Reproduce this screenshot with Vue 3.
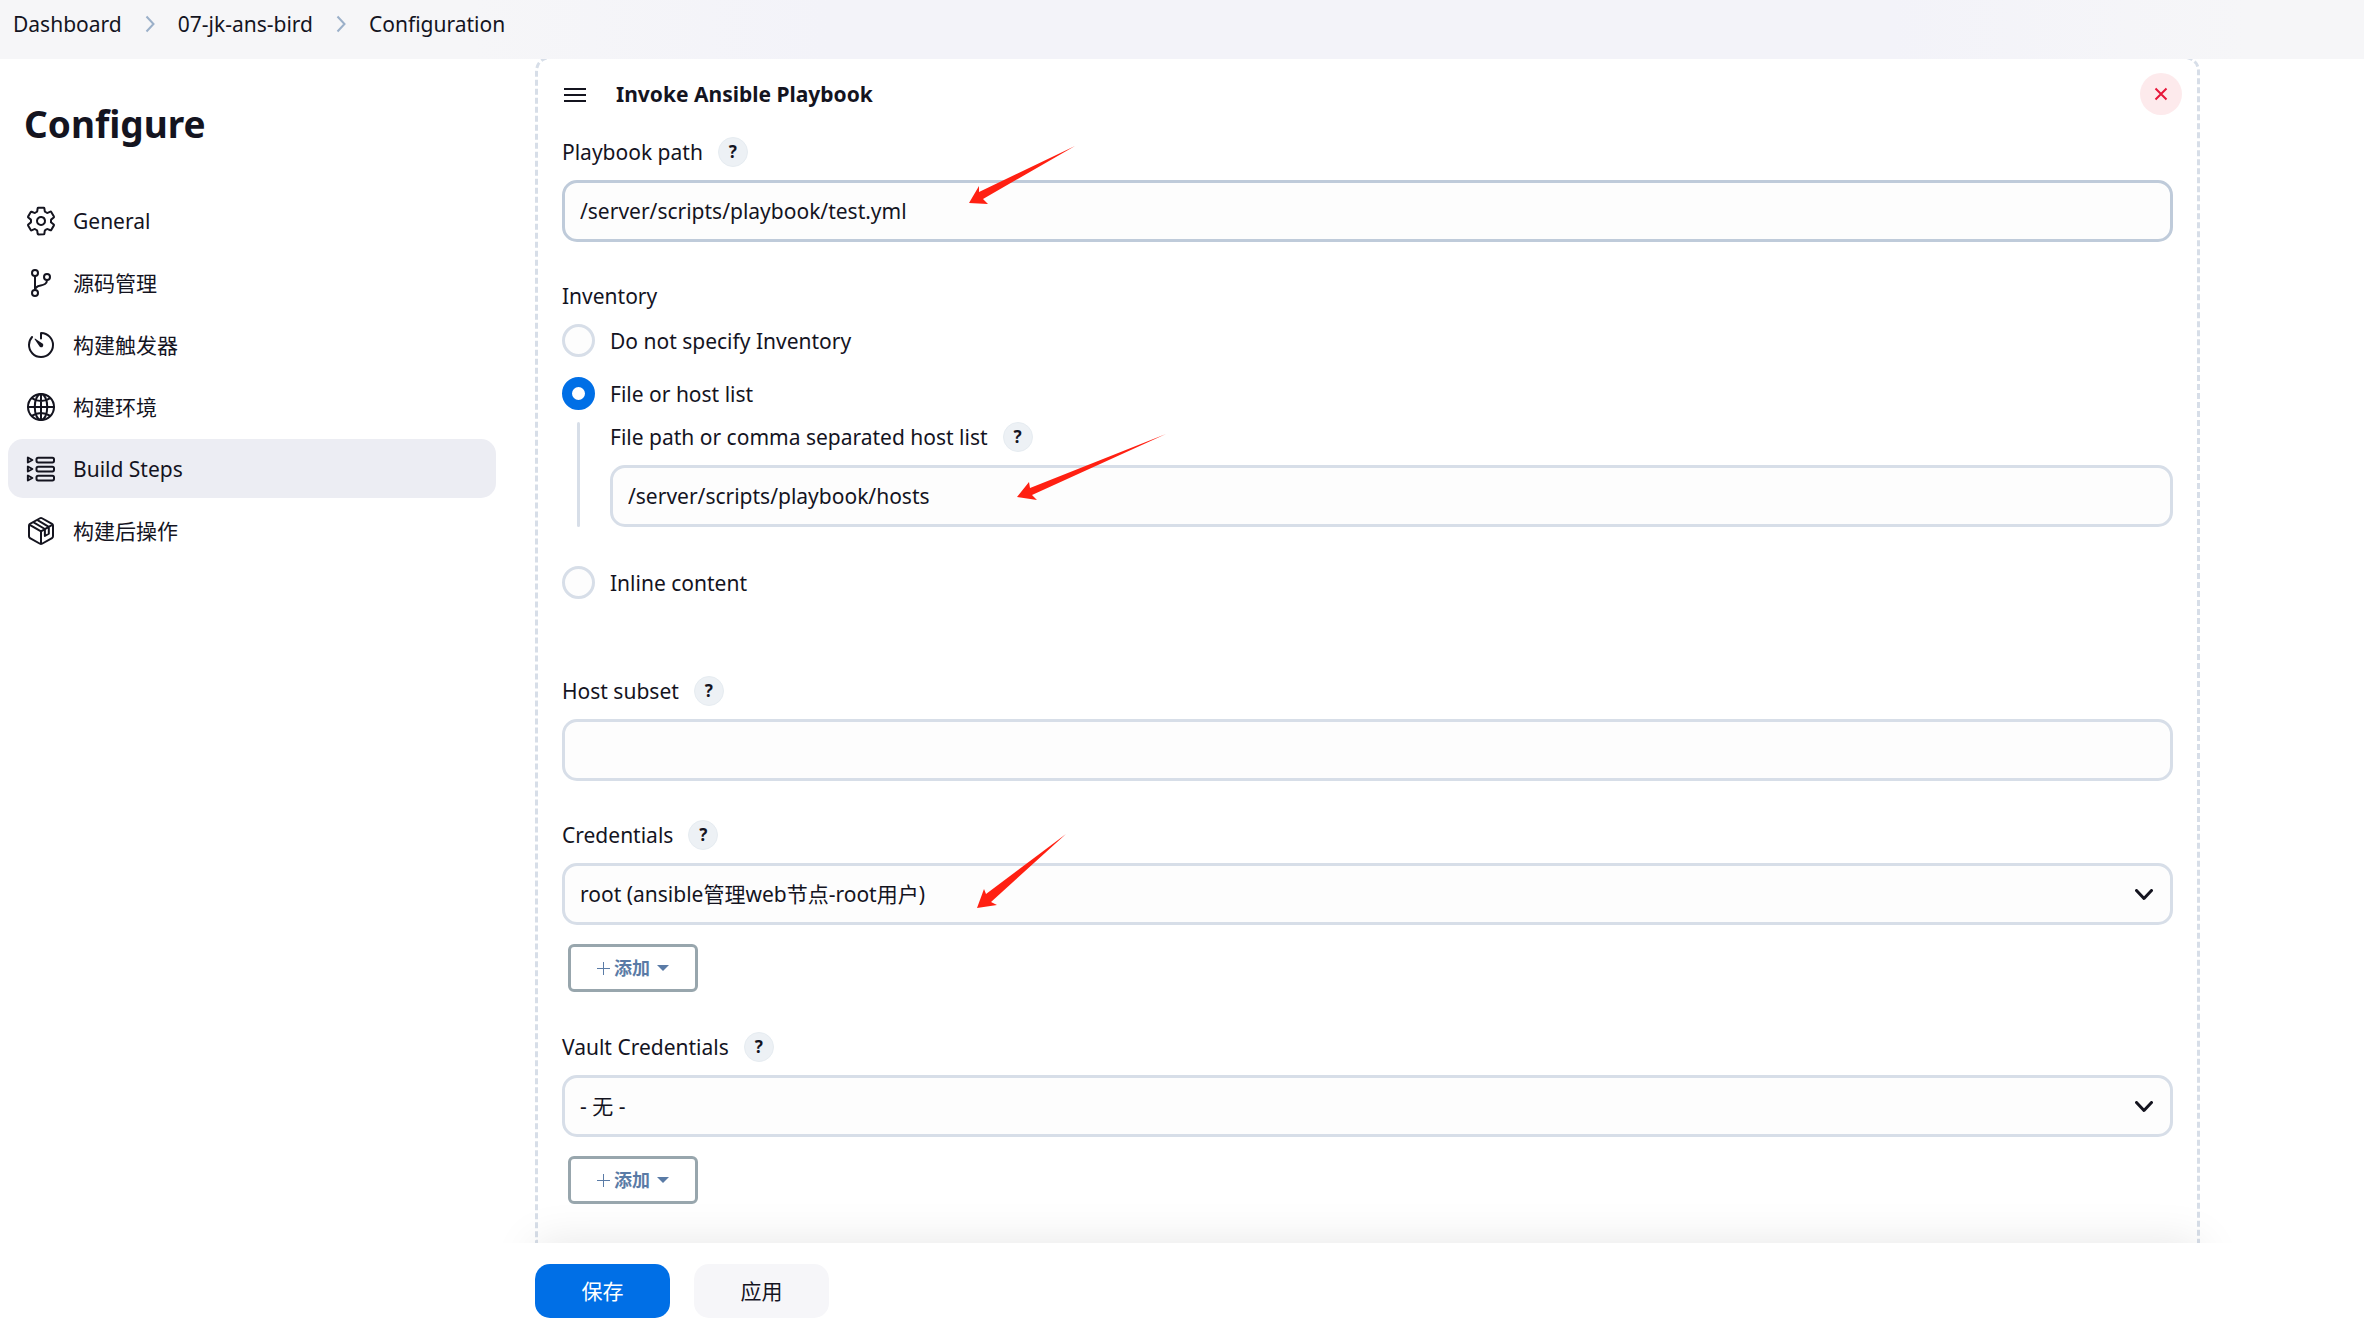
<script setup>
import { ref } from 'vue'

const crumbs = ['Dashboard', '07-jk-ans-bird', 'Configuration']
const sections = [
  { name: 'General', icon: 'gear' },
  { name: '源码管理', icon: 'branch' },
  { name: '构建触发器', icon: 'timer' },
  { name: '构建环境', icon: 'globe' },
  { name: 'Build Steps', icon: 'steps' },
  { name: '构建后操作', icon: 'package' },
]
const active = ref('Build Steps')
const playbook = ref('/server/scripts/playbook/test.yml')
const inventory = ref('file')
const hosts = ref('/server/scripts/playbook/hosts')
const subset = ref('')
const credential = ref('root')
const vault = ref('none')
</script>

<template>
  <div class="page">
    <header class="topbar">
      <nav class="crumbs" aria-label="Breadcrumb">
        <template v-for="(c, i) in crumbs" :key="c">
          <svg v-if="i" class="sep" viewBox="0 0 10 18" aria-hidden="true"><path d="M1.5 1.5 8.5 9l-7 7.500" /></svg>
          <a href="#">{{ c }}</a>
        </template>
      </nav>
    </header>

    <div class="body">
      <aside class="side">
        <h1>Configure</h1>
        <nav class="menu" aria-label="Sections">
          <a v-for="s in sections" :key="s.name" href="#" class="item" :class="{ active: s.name === active }" @click.prevent="active = s.name">
            <svg class="icon" viewBox="0 0 512 512" aria-hidden="true">
              <path v-if="s.icon === 'gear'" d="M262.290 192.310a64 64 0 1 0 57.400 57.400 64.130 64.130 0 0 0-57.400-57.400zM416.390 256a154.340 154.340 0 0 1-1.530 20.790l45.210 35.460a10.810 10.810 0 0 1 2.450 13.750l-42.770 74a10.810 10.810 0 0 1-13.140 4.590l-44.900-18.080a16.110 16.110 0 0 0-15.170 1.750A164.480 164.480 0 0 1 325 400.800a15.940 15.940 0 0 0-8.820 12.140l-6.730 47.890a11.080 11.080 0 0 1-10.680 9.170h-85.540a11.110 11.110 0 0 1-10.690-8.870l-6.720-47.820a16.070 16.070 0 0 0-9-12.220 155.300 155.300 0 0 1-21.460-12.570 16 16 0 0 0-15.110-1.710l-44.890 18.070a10.810 10.810 0 0 1-13.140-4.580l-42.770-74a10.800 10.800 0 0 1 2.450-13.750l38.210-30a16.050 16.050 0 0 0 6-14.080c-.36-4.170-.58-8.330-.58-12.500s.21-8.270.58-12.350a16 16 0 0 0-6.070-13.940l-38.190-30A10.810 10.810 0 0 1 49.480 186l42.770-74a10.810 10.810 0 0 1 13.140-4.590l44.900 18.080a16.110 16.110 0 0 0 15.170-1.750A164.480 164.480 0 0 1 187 111.200a15.940 15.940 0 0 0 8.820-12.140l6.730-47.890A11.080 11.080 0 0 1 213.230 42h85.540a11.110 11.110 0 0 1 10.690 8.870l6.720 47.820a16.070 16.070 0 0 0 9 12.220 155.300 155.300 0 0 1 21.460 12.570 16 16 0 0 0 15.110 1.710l44.890-18.070a10.810 10.810 0 0 1 13.140 4.580l42.770 74a10.800 10.800 0 0 1-2.450 13.750l-38.210 30a16.050 16.050 0 0 0-6.050 14.080c.33 4.140.55 8.300.55 12.470z" />
              <template v-else-if="s.icon === 'branch'">
                <circle cx="160" cy="96" r="48" /><circle cx="160" cy="416" r="48" /><circle cx="352" cy="160" r="48" />
                <path d="M160 368V144M352 208c0 128-192 48-192 160" />
              </template>
              <template v-else-if="s.icon === 'timer'">
                <path d="M112.910 128A191.850 191.850 0 0 0 64 254c-1.180 106.350 85.650 193.800 192 194 106.200.2 192-85.830 192-192 0-104.540-83.550-189.610-187.500-192a4.360 4.360 0 0 0-4.500 4.370V152" />
                <path class="solid" d="m233.380 278.630-79-113a8.130 8.130 0 0 1 11.320-11.320l113 79a32.500 32.500 0 0 1-37.250 53.260 33.210 33.210 0 0 1-8.070-7.940z" />
              </template>
              <template v-else-if="s.icon === 'globe'">
                <circle cx="256" cy="256" r="208" /><ellipse cx="256" cy="256" rx="100" ry="208" />
                <path d="M256 48v416M48 256h416M117 117c38 27 86 43 139 43s101-16 139-43M117 395c38-27 86-43 139-43s101 16 139 43" />
              </template>
              <template v-else-if="s.icon === 'steps'">
                <rect x="184" y="74" width="280" height="76" rx="26" /><rect x="184" y="218" width="280" height="76" rx="26" /><rect x="184" y="362" width="280" height="76" rx="26" />
                <path d="M46 72v80l72-40zM46 216v80l72-40zM46 360v80l72-40z" />
              </template>
              <template v-else>
                <path d="M448 341V171a32 32 0 0 0-16-28L272 52a32 32 0 0 0-32 0L80 143a32 32 0 0 0-16 28v170a32 32 0 0 0 16 28l160 91a32 32 0 0 0 32 0l160-91a32 32 0 0 0 16-28zM69 153l187 110 187-110M256 463V263M131 114l187 110M194 79l187 110M318 226v110l63-36V190" />
              </template>
            </svg>
            <span>{{ s.name }}</span>
          </a>
        </nav>
      </aside>

      <main class="main">
        <form class="card" @submit.prevent>
          <div class="card-head">
            <svg class="grip" viewBox="0 0 24 14" aria-hidden="true"><path d="M1 1h22M1 7h22M1 13h22" /></svg>
            <h2>Invoke Ansible Playbook</h2>
            <button type="button" class="close" aria-label="Delete"><svg viewBox="0 0 14 14"><path d="M1.500 1.500l11 11M12.500 1.500l-11 11" /></svg></button>
          </div>

          <div class="field">
            <div class="label"><label for="playbook">Playbook path</label><button type="button" class="help">?</button></div>
            <div class="control">
              <input id="playbook" v-model="playbook" class="box hover" type="text" />
              <svg class="arrow arrow-playbook" viewBox="0 0 108 60" aria-hidden="true"><path d="M1 58 11 41v6L107 1 15 54l5 5z" /></svg>
            </div>
          </div>

          <fieldset class="field inventory">
            <legend class="label">Inventory</legend>
            <label class="option"><input v-model="inventory" type="radio" name="inventory" value="none" /><span>Do not specify Inventory</span></label>
            <label class="option"><input v-model="inventory" type="radio" name="inventory" value="file" /><span>File or host list</span></label>
            <div class="nested">
              <div class="label"><label for="hosts">File path or comma separated host list</label><button type="button" class="help">?</button></div>
              <div class="control">
                <input id="hosts" v-model="hosts" class="box" type="text" />
                <svg class="arrow arrow-hosts" viewBox="0 0 150 68" aria-hidden="true"><path d="M1 64 13 49l1 6L150 1 16 62l5 5z" /></svg>
              </div>
            </div>
            <label class="option"><input v-model="inventory" type="radio" name="inventory" value="inline" /><span>Inline content</span></label>
          </fieldset>

          <div class="field">
            <div class="label"><label for="subset">Host subset</label><button type="button" class="help">?</button></div>
            <input id="subset" v-model="subset" class="box" type="text" />
          </div>

          <div class="field">
            <div class="label"><label for="cred">Credentials</label><button type="button" class="help">?</button></div>
            <div class="control">
              <select id="cred" v-model="credential" class="box">
                <option value="root">root (ansible管理web节点-root用户)</option>
              </select>
              <svg class="chev" viewBox="0 0 18 12" aria-hidden="true"><path d="M1.500 1.500 9 9.500l7.500-8" /></svg>
              <svg class="arrow arrow-cred" viewBox="0 0 92 76" aria-hidden="true"><path d="M1 75 8 56l2 5L90 1 15 69l6 3z" /></svg>
            </div>
            <button type="button" class="add"><svg class="plus" viewBox="0 0 13 13"><path d="M6.500 0v13M0 6.500h13" /></svg>添加<i class="caret"></i></button>
          </div>

          <div class="field">
            <div class="label"><label for="vault">Vault Credentials</label><button type="button" class="help">?</button></div>
            <div class="control">
              <select id="vault" v-model="vault" class="box"><option value="none">- 无 -</option></select>
              <svg class="chev" viewBox="0 0 18 12" aria-hidden="true"><path d="M1.500 1.500 9 9.500l7.500-8" /></svg>
            </div>
            <button type="button" class="add"><svg class="plus" viewBox="0 0 13 13"><path d="M6.500 0v13M0 6.500h13" /></svg>添加<i class="caret"></i></button>
          </div>
        </form>

        <div class="actions">
          <button type="button" class="btn primary">保存</button>
          <button type="button" class="btn">应用</button>
        </div>
      </main>
    </div>
  </div>
</template>

<style>
body { margin: 0; background: #fff; overflow: hidden; }
</style>

<style scoped>
.page { height: 100vh; display: flex; flex-direction: column; font: 21px/30px "Noto Sans", "Noto Sans CJK SC", sans-serif; color: #14141f; }
.page *, .page *::before { box-sizing: border-box; }
button, input, select { font: inherit; color: inherit; margin: 0; }
a { color: inherit; text-decoration: none; }
svg { display: block; fill: none; stroke: currentColor; }

.topbar { position: relative; z-index: 2; flex: none; height: 59px; padding: 9px 13px; background: linear-gradient(90deg, #f6f6f8 20%, #f3f3f9 35%, #f3f3f9 80%, #f6f6f8 95%); }
.crumbs { display: flex; align-items: center; }
.sep { width: 10px; height: 18px; margin: 0 23px; color: #9bb0c9; stroke-width: 2; }

.body { flex: 1; min-height: 0; display: flex; }
.side { flex: none; width: 535px; padding: 39px 39px 0 8px; }
h1 { margin: 0 0 41px 16px; font-size: 37px; line-height: 52px; font-weight: 700; }
.menu { display: flex; flex-direction: column; gap: 3px; }
.item { display: flex; align-items: center; gap: 16px; height: 59px; padding-left: 17px; border-radius: 15px; }
.item.active { background: #ecedf3; }
.icon { width: 32px; height: 32px; stroke-width: 32; stroke-linecap: round; stroke-linejoin: round; }
.solid { fill: currentColor; stroke: none; }

.main { flex: 1; min-width: 0; margin-right: 164px; display: flex; flex-direction: column; }
.card { flex: 1; min-height: 0; margin-top: -3px; padding: 14px 24px 0; border: 3px dashed #d7dee8; border-bottom: 0; border-radius: 15px 15px 0 0; }
.card-head { display: flex; align-items: center; height: 42px; margin-right: -9px; }
.grip { width: 24px; height: 14px; margin: 2px 29px 0 1px; stroke-width: 2; }
h2 { flex: 1; margin: 0; font-size: 21px; line-height: 30px; font-weight: 700; }
.close { display: grid; place-items: center; width: 42px; height: 42px; padding: 0; border: 0; border-radius: 50%; background: #fdeaec; color: #e6173a; }
.close svg { width: 14px; height: 14px; stroke-width: 2; }

.field { margin: 0 0 39px; padding: 0; border: 0; }
.card-head + .field { margin-top: 22px; }
.label { display: flex; align-items: center; gap: 15px; height: 30px; margin-bottom: 13px; padding: 0; }
.help { width: 30px; height: 30px; padding: 0; border: 1px solid #e6ecf1; border-radius: 50%; background: #edf1f5; font-size: 17px; line-height: 28px; font-weight: 700; }
.control { position: relative; }
.box { display: block; width: 100%; height: 62px; padding: 0 15px; border: 3px solid #d7dee8; border-radius: 15px; background: #fdfdfd; outline: 0; appearance: none; }
.box.hover { border-color: #bfcbda; }
.chev { position: absolute; right: 20px; top: 26px; width: 18px; height: 12px; stroke-width: 3; stroke-linecap: round; stroke-linejoin: round; pointer-events: none; }

.inventory { margin-bottom: 77px; }
.option { display: flex; align-items: center; gap: 15px; height: 33px; margin-bottom: 20px; }
.option:last-child { margin-bottom: 0; }
.option input { appearance: none; width: 33px; height: 33px; border: 3px solid #d7dee8; border-radius: 50%; background: #fdfdfd; }
.option input:checked { border: 10px solid #006fe6; background: #fff; }
.nested { position: relative; margin: -8px 0 39px 48px; }
.nested::before { content: ""; position: absolute; left: -33px; top: 0; bottom: 0; width: 3px; border-radius: 2px; background: #d7dee8; }

.add { display: flex; align-items: center; justify-content: center; width: 130px; height: 48px; margin: 19px 0 40px 6px; padding: 0; border: 3px solid #98a6ad; border-radius: 6px; background: #fff; color: #5a7ba6; font-size: 18px; font-weight: 700; }
.field:has(.add) { margin-bottom: 0; }
.plus { width: 13px; height: 13px; margin-right: 4px; stroke-width: 1; }
.caret { margin-left: 7px; border: 6px solid transparent; border-top-color: currentColor; border-bottom: 0; }

.arrow { position: absolute; fill: #ff2012; stroke: none; pointer-events: none; }
.arrow-playbook { left: 406px; top: -35px; width: 108px; height: 60px; }
.arrow-hosts { left: 406px; top: -32px; width: 150px; height: 68px; }
.arrow-cred { left: 414px; top: -30px; width: 92px; height: 76px; }

.actions { position: relative; z-index: 1; flex: none; display: flex; gap: 24px; height: 83px; padding-top: 21px; background: #fff; }
.actions::before { content: ""; position: absolute; inset: 0; box-shadow: 0 0 45px rgba(0, 0, 0, 0.1); clip-path: inset(-60px -60px 100% -60px); pointer-events: none; }
.btn { width: 135px; height: 54px; padding: 0; border: 0; border-radius: 15px; background: #f6f6f9; }
.btn.primary { background: #006fe6; color: #fff; }
</style>
